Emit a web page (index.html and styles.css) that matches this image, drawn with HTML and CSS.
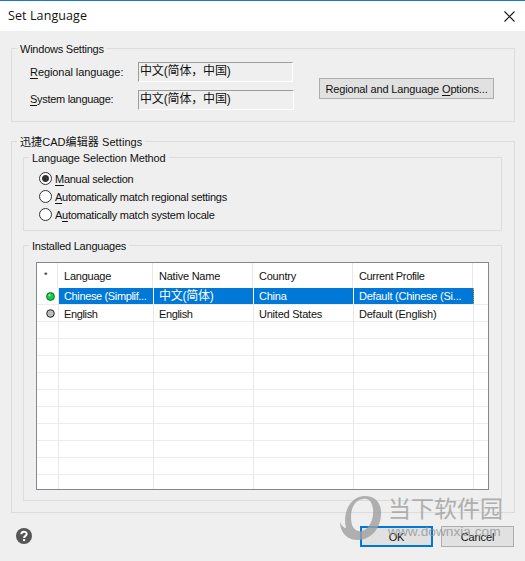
FILE: index.html
```html
<!DOCTYPE html>
<html lang="en">
<head>
<meta charset="utf-8">
<title>Set Language</title>
<link rel="stylesheet" href="styles.css">
</head>
<body>
<div class="dialog">
  <header class="titlebar">
    <h1 class="title">Set Language</h1>
    <svg class="close" width="11" height="11" viewBox="0 0 11 11"><path d="M.5.5l10 10M10.5.5l-10 10" stroke="#111" stroke-width="1.1" fill="none"/></svg>
  </header>

  <section class="group windows">
    <h2 class="legend">Windows Settings</h2>
    <div class="windows-body">
      <div class="fields">
        <div class="field"><span class="label label-regional"><u>R</u>egional language:</span><span class="value">中文(简体，中国)</span></div>
        <div class="field"><span class="label label-system"><u>S</u>ystem language:</span><span class="value wide">中文(简体，中国)</span></div>
      </div>
      <button class="btn options">Regional and Language <u>O</u>ptions...</button>
    </div>
  </section>

  <section class="group editor">
    <h2 class="legend legend-editor">迅捷CAD编辑器 Settings</h2>
    <section class="group method">
      <h3 class="legend legend-method">Language Selection Method</h3>
      <div class="radios">
        <div class="radio"><i class="dot on"></i><span><u>M</u>anual selection</span></div>
        <div class="radio"><i class="dot"></i><span><u>A</u>utomatically match regional settings</span></div>
        <div class="radio"><i class="dot"></i><span>A<u>u</u>tomatically match system locale</span></div>
      </div>
    </section>
    <section class="group installed">
      <h3 class="legend">Installed Languages</h3>
      <div class="list">
        <div class="row head"><span class="star">*</span><span>Language</span><span>Native Name</span><span>Country</span><span class="tight">Current Profile</span></div>
        <div class="row selected"><span class="state"><svg width="9" height="9" viewBox="0 0 9 9"><circle cx="4.5" cy="4.5" r="3.9" fill="#0fcf45" stroke="#14662b"/><circle cx="3.5" cy="3.3" r="1.1" fill="#9bf5b0"/></svg></span><span class="tight">Chinese (Simplif...</span><span class="cjk">中文(简体)</span><span>China</span><span>Default (Chinese (Si...</span></div>
        <div class="row english"><span class="state"><svg width="9" height="9" viewBox="0 0 9 9"><circle cx="4.5" cy="4.5" r="3.8" fill="#bbb" stroke="#222"/></svg></span><span class="tight">English</span><span class="tight">English</span><span>United States</span><span>Default (English)</span></div>
        <div class="row"><span></span><span></span><span></span><span></span><span></span></div>
        <div class="row"><span></span><span></span><span></span><span></span><span></span></div>
        <div class="row"><span></span><span></span><span></span><span></span><span></span></div>
        <div class="row"><span></span><span></span><span></span><span></span><span></span></div>
        <div class="row"><span></span><span></span><span></span><span></span><span></span></div>
        <div class="row"><span></span><span></span><span></span><span></span><span></span></div>
        <div class="row"><span></span><span></span><span></span><span></span><span></span></div>
        <div class="row"><span></span><span></span><span></span><span></span><span></span></div>
        <div class="row"><span></span><span></span><span></span><span></span><span></span></div>
        <div class="row last"><span></span><span></span><span></span><span></span><span></span></div>
      </div>
    </section>
  </section>

  <footer class="actions">
    <svg class="help" width="16" height="16" viewBox="0 0 16 16"><circle cx="8" cy="8" r="8" fill="#555"/><path d="M5.3 6.3C5.3 2.9 10.7 2.9 10.7 6.1C10.7 8 8.1 7.8 8.1 10" fill="none" stroke="#fff" stroke-width="2"/><rect x="7" y="11.1" width="2.2" height="2" fill="#fff"/></svg>
    <button class="btn ok">OK</button>
    <button class="btn cancel">Cancel</button>
  </footer>

  <div class="watermark">
    <svg class="mark" width="44" height="50" viewBox="0 0 44 50"><path fill-rule="evenodd" d="M25 2C36 2 42 10 41 21C40 36 30 46 17 46C8 46 0 39 0 28C2 32 4 34 6 34C2 18 11 2 25 2ZM23 5C13 6 9 19 12 31C14 36 18 38 22 37C30 35 34 24 33 15C32 8 29 4 23 5Z"/></svg>
    <div class="wm-name">当下软件园</div>
    <div class="wm-url">www.downxia.com</div>
  </div>
</div>
</body>
</html>
```
FILE: styles.css
```css
* { box-sizing: border-box; }
body { margin: 0; font: 11px/14px "Liberation Sans", "Noto Sans CJK SC", sans-serif; letter-spacing: -.23px; color: #111; }
h1, h2, h3 { margin: 0; font-size: inherit; font-weight: normal; }
u { text-underline-offset: 2px; }
.dialog { position: relative; display: flow-root; width: 525px; height: 561px; background: #efefef; overflow: hidden; white-space: nowrap; }
.titlebar { display: flex; align-items: center; justify-content: space-between; height: 31px; padding: 0 10px 0 8px; background: #fff; border-top: 1px solid #1979ca; }
.title { font: 12.5px/16px "Open Sans", sans-serif; letter-spacing: .1px; }
.group { border: 1px solid #dcdcdc; }
.legend { width: fit-content; height: 14px; margin: -7px 0 0 5px; padding: 0 3px; background: #efefef; }
.legend-editor { letter-spacing: .08px; }
.legend-method { letter-spacing: -.14px; }
.windows { width: 504px; height: 74px; margin: 17px 0 0 11px; }
.windows-body { display: flex; justify-content: space-between; padding: 6px 20px 0 18px; }
.fields { display: grid; gap: 8px; }
.field { display: flex; align-items: center; height: 20px; }
.label { width: 108px; }
.label-regional { letter-spacing: -.08px; }
.label-system { letter-spacing: -.3px; padding-bottom: 3px; }
.value { width: 155px; height: 20px; padding-left: 1px; font-size: 12px; line-height: 17px; letter-spacing: -.15px; border: 1px solid #fff; border-top-color: #9c9c9c; border-left-color: #9c9c9c; }
.value.wide { width: 156px; }
.btn { padding: 0; font: inherit; letter-spacing: -.1px; color: #111; background: #e1e1e1; border: 1px solid #adadad; }
.options { width: 175px; height: 21px; margin-top: 16px; letter-spacing: -.15px; }
.editor { width: 504px; height: 372px; margin: 19px 0 0 11px; }
.method { width: 479px; height: 74px; margin: 8px 0 0 11px; }
.radios { display: grid; gap: 4px; padding: 6px 0 0 15px; }
.radio { display: flex; align-items: center; gap: 3px; height: 14px; letter-spacing: -.26px; }
.radio span { padding-top: 1px; }
.dot { width: 13px; height: 13px; border: 1px solid #333; border-radius: 50%; background: #fff; }
.dot.on { background: radial-gradient(circle, #333 3px, #fff 4px); }
.installed { width: 479px; height: 256px; margin: 14px 0 0 11px; }
.list { width: 453px; height: 228px; margin: 9px 0 0 12px; background: #fff; border: 1px solid #828790; overflow: hidden; }
.row { display: grid; grid-template-columns: 22px 95px 100px 100px 120px; height: 17px; border-bottom: 1px solid #ececec; line-height: 16px; }
.row > span { padding-left: 5px; border-right: 1px solid #e8e8e8; overflow: hidden; }
.row.head { height: 25px; border: 0; grid-template-columns: 21px 95px 100px 100px 120px; line-height: 26px; }
.row.head > span { padding-left: 6px; }
.row.head .star { font-size: 9px; line-height: 24px; padding-left: 7px; }
.row.last { border: 0; }
.row.english { line-height: 18px; }
.row .state { display: flex; align-items: center; padding-left: 9px; }
.row .tight { letter-spacing: -.36px; }
.selected > span:not(.state) { color: #fff; background: #0078d7; border-right-color: #fff; }
.selected > span:last-child:not(.state) { border-right: 1px dotted #e58a35; }
.cjk { font-size: 12px; }
.actions { display: flex; align-items: center; height: 21px; margin: 13px 11px 0 16px; }
.help { margin-top: -2px; }
.ok { width: 73px; height: 21px; margin-left: auto; border: 2px solid #0078d7; }
.cancel { width: 73px; height: 21px; margin-left: 8px; }
.watermark { position: absolute; left: 341px; top: 494px; width: 170px; height: 55px; pointer-events: none; opacity: .8; letter-spacing: 0; }
.mark { position: absolute; left: -1px; top: 0; fill: #a0a0a0; }
.wm-name { position: absolute; left: 47px; top: -1px; font: 23px/28px "Noto Sans CJK SC", sans-serif; color: #a0a0a0; }
.wm-url { position: absolute; left: 47px; top: 30px; font: 13.7px/16px "Liberation Sans", sans-serif; color: #969696; }
```
